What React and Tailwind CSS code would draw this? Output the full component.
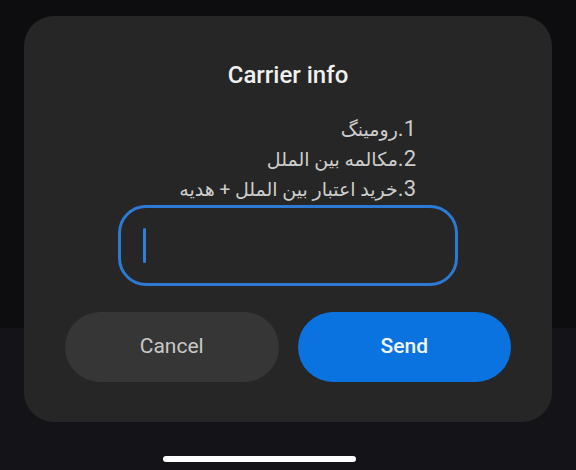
import React from 'react'

const lines = ['رومینگ', 'مکالمه بین الملل', 'خرید اعتبار بین الملل + هدیه']

export default function App() {
    return (
        <div className="relative h-[470px] w-[576px] overflow-hidden bg-[#141418] font-['Roboto','DejaVu_Sans',sans-serif]">
            <div className="h-[328px] bg-[#0d0d0f]" />

            <div className="absolute left-[24px] top-[16px] flex h-[406px] w-[528px] flex-col rounded-[30px] bg-[#262626]">
                <h1 className="mt-[45px] text-center text-[24px] font-medium leading-[28px] text-[#f0f0f0]">
                    Carrier info
                </h1>

                <div className="mx-auto mt-[25px] w-[340px] pr-[42px]" dir="rtl">
                    {lines.map((l, i) => (
                        <p key={l} className="h-[30px] text-[19px] leading-[30px] text-[#cdcdcd]">
                            <span className="text-[22px]">{i + 1}.</span>
                            {l}
                        </p>
                    ))}
                </div>

                <div className="mx-auto mt-[1px] flex h-[81px] w-[340px] items-center rounded-[28px] border-[3px] border-[#2c7ad4] pl-[22px]">
                    <div className="h-[35px] w-[3px] rounded-full bg-[#2f80d8]" />
                </div>

                <div className="mt-[26px] flex gap-[19px] px-[41px]">
                    <button className="h-[70px] flex-1 rounded-full bg-[#363636] text-[21px] text-[#c8c8c8]">
                        Cancel
                    </button>
                    <button className="h-[70px] flex-1 rounded-full bg-[#0a73e0] text-[21px] font-medium text-[#f2f6fb]">
                        Send
                    </button>
                </div>
            </div>

            <div className="absolute bottom-[8px] left-[163px] h-[6px] w-[193px] rounded-full bg-white" />
        </div>
    )
}
